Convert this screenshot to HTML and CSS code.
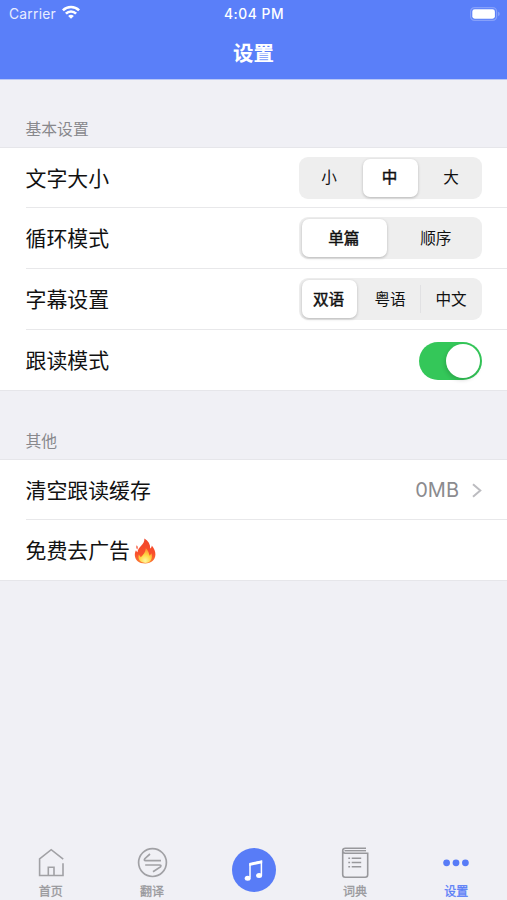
FILE: index.html
```html
<!DOCTYPE html>
<html lang="zh-CN">
<head>
<meta charset="utf-8">
<title>设置</title>
<link rel="stylesheet" href="styles.css">
</head>
<body>
<div class="screen">
  <header class="header">
    <div class="status">
      <div class="carrier"><span>Carrier</span>
        <svg class="wifi" width="18" height="14" viewBox="0 0 18 14" fill="none" stroke="#fff" stroke-width="2.6"><path d="M0.9 5.4a11.5 11.5 0 0 1 16.2 0M3.9 8.600a7.2 7.2 0 0 1 10.2 0"/><path d="M9 13.8 6.1 11.100a4.1 4.1 0 0 1 5.8 0z" fill="#fff" stroke="none"/></svg>
      </div>
      <div class="time">4:04 PM</div>
      <div class="battery"><svg width="30" height="14" viewBox="0 0 30 14"><rect x=".6" y=".6" width="26" height="12.8" rx="4" fill="none" stroke="#86a0fa" stroke-width="1.2"/><rect x="2.3" y="2.3" width="22.6" height="9.4" rx="2.4" fill="#fff"/><path d="M28 4.8q1.8.6 1.8 2.2T28 9.2z" fill="#86a0fa"/></svg></div>
    </div>
    <h1 class="title">设置</h1>
  </header>
  <main class="content">
    <h2 class="section-title first">基本设置</h2>
    <section class="group">
      <div class="row"><span class="label">文字大小</span>
        <div class="segmented"><span class="seg">小</span><span class="seg active">中</span><span class="seg">大</span></div></div>
      <div class="row"><span class="label">循环模式</span>
        <div class="segmented"><span class="seg active">单篇</span><span class="seg">顺序</span></div></div>
      <div class="row"><span class="label">字幕设置</span>
        <div class="segmented"><span class="seg active">双语</span><span class="seg">粤语</span><span class="seg divided">中文</span></div></div>
      <div class="row"><span class="label">跟读模式</span><span class="switch"><span class="knob"></span></span></div>
    </section>
    <h2 class="section-title">其他</h2>
    <section class="group">
      <div class="row"><span class="label">清空跟读缓存</span>
        <div class="detail"><span>0MB</span><svg width="10" height="15" viewBox="0 0 10 15" fill="none" stroke="#bcbcc0" stroke-width="2"><path d="m1 1.2 7.3 6.3L1 13.8"/></svg></div></div>
      <div class="row"><span class="label">免费去广告</span>
        <svg class="fire" width="22" height="26" viewBox="0 0 22 26">
          <defs>
            <linearGradient id="flame" x1="0" y1="0" x2="0" y2="1"><stop offset="0" stop-color="#f0452b"/><stop offset=".6" stop-color="#f9502c"/><stop offset="1" stop-color="#fb7c34"/></linearGradient>
            <radialGradient id="core" cx=".5" cy=".85" r=".8"><stop offset="0" stop-color="#fff6a0"/><stop offset=".5" stop-color="#ffd744"/><stop offset="1" stop-color="#ff8f31"/></radialGradient>
          </defs>
          <path d="M10.4.4c4 2.4 6 5.7 5.8 10 1-.6 1.5-1.7 1.6-3 2.4 2.8 3.7 6 3.6 9.2C21.2 22 17.300 25.500 11.200 25.500 5 25.500.9 22 .8 17c0-1.800.5-3.300 1.200-4.700.4 1 .8 1.700 1.500 2C3.700 8.500 10.800 7 10.400.4zM2.700 7.200c1.400 1.500 1.200 3 .5 4.200-1-1.200-1.100-2.700-.5-4.200z" fill="url(#flame)"/>
          <path d="M11.800 10.200c3.400 3 3 5.700 4 7.500l1.600-2.500c1.700 5-.6 9.700-6.200 9.700-5.300 0-7.700-3.900-6.400-8.300l2 2.600c2.800-2.500 4.600-5.100 5-9z" fill="url(#core)"/>
        </svg></div>
    </section>
  </main>
  <nav class="tabs">
    <a class="tab"><svg width="30" height="30" viewBox="0 0 30 30" fill="none" stroke="#a1a1a5" stroke-width="1.600"><path d="M27.200 10.200 15.200.7 3.600 10v16.500H27V14.200M12.300 26.500v-8.200H18v8.200"/></svg><span>首页</span></a>
    <a class="tab"><svg width="30" height="30" viewBox="0 0 30 30" fill="none" stroke="#a1a1a5" stroke-width="1.700"><circle cx="15.500" cy="13.600" r="13.900"/><path d="M13 5 7.800 9.700q-1.200 2 .8 2H24M8.200 16H22.500q2.300 0 .9 1.900L16 22.800"/></svg><span>翻译</span></a>
    <a class="tab center"><svg width="44" height="44" viewBox="0 0 44 44"><circle cx="22" cy="22" r="22" fill="#587cf7"/><path d="M18 29.500V16l11.400-2.500v13.700" fill="none" stroke="#fff" stroke-width="1.500"/><ellipse cx="15.700" cy="30.200" rx="3" ry="2.500" fill="#fff"/><ellipse cx="27.100" cy="27.500" rx="3" ry="2.500" fill="#fff"/><path d="M17.300 15l12.900-2.700v3L17.300 18z" fill="#fff"/></svg></a>
    <a class="tab book"><svg width="30" height="32" viewBox="0 0 30 32" fill="none" stroke="#98989c" stroke-width="1.600"><path d="M26 1.200H5.500Q2.700 1.200 2.700 3.700v23.800q0 2.700 2.500 2.700h20q2.500 0 2.500-2.500V6.200H5.200q-2.500 0-2.500-2.500"/><path d="M4.500 3.700H26" stroke-width="1.400"/><path d="M8.300 11.300h1.800m1.600 0h9.500M8.300 15.500h1.800m1.600 0h9.500M8.300 19.700h1.800m1.600 0h9.500" stroke-width="1.500"/></svg><span>词典</span></a>
    <a class="tab selected"><svg width="30" height="30" viewBox="0 0 30 30" fill="#587cf7"><circle cx="5.600" cy="13.800" r="3.400"/><circle cx="15" cy="13.800" r="3.400"/><circle cx="24.400" cy="13.800" r="3.400"/></svg><span>设置</span></a>
  </nav>
</div>
</body>
</html>
```
FILE: styles.css
```css
* { box-sizing: border-box; }
body { margin: 0; font-family: Inter, "Noto Sans CJK SC", sans-serif; background: #f0f0f5; color: #111; }
.screen { height: 900px; display: flex; flex-direction: column; overflow: hidden; }
.header { height: 79px; background: #5a7ff9; color: #fff; flex: none; box-shadow: 0 1px #b9c7f7; }
.status { height: 27px; display: grid; grid-template-columns: 1fr auto 1fr; align-items: center; padding: 0 7px 0 9px; font-size: 13.800px; }
.carrier { display: flex; align-items: center; gap: 6px; color: #e8edff; letter-spacing: .25px; }
.wifi { margin-top: -3px; }
.time { font-weight: 500; letter-spacing: .55px; margin-right: 1px; }
.battery { display: flex; justify-content: flex-end; }
.title { margin: 0; height: 52px; line-height: 53px; text-align: center; font-size: 20.500px; font-weight: 600; }
.content { flex: 1; }
.section-title { margin: 0; height: 69px; padding: 40px 26px 0 25.500px; font-size: 15.800px; line-height: 22px; font-weight: 400; color: #88888c; }
.group { background: #fff; border-bottom: 1px solid #e6e6ea; box-shadow: 0 -1px #e6e6ea; }
.row { height: 61px; margin-left: 26px; padding-right: 25px; display: flex; align-items: center; border-bottom: 1px solid #e8e8ea; }
.row:first-child { height: 60px; }
.row:last-child { height: 60px; border-bottom: 0; }
.label { font-size: 20.900px; line-height: 30px; margin-left: -.5px; padding-top: 2px; }
.segmented { margin-left: auto; width: 183px; height: 42px; border-radius: 9px; background: #eee; display: grid; grid-auto-flow: column; grid-auto-columns: minmax(0, 1fr); }
.seg { display: flex; align-items: center; justify-content: center; font-size: 15.600px; line-height: 22px; border-radius: 7px; padding: 1px 1px 0 0; }
.seg.active { background: #fff; -webkit-text-stroke: .45px #111; margin: 2px 3.500px 2px 2.500px; box-shadow: 0 1px 3px rgba(0,0,0,.24); }
.seg.divided { border-radius: 0; box-shadow: -1px 0 #e1e1e3; margin: 7px 0; }
.switch { margin: 1px 0 0 auto; width: 63px; height: 38px; border-radius: 19px; background: #34c759; padding: 2px; display: flex; justify-content: flex-end; }
.knob { width: 34px; height: 34px; border-radius: 50%; background: #fff; box-shadow: -1px 2px 4px rgba(0,0,0,.16); }
.detail { margin-left: auto; display: flex; align-items: center; gap: 13px; padding-top: 1px; font-size: 20px; color: #8b8b8f; }
.fire { margin: 2px 0 0 4px; }
.tabs { height: 57px; display: flex; flex: none; }
.tab { flex: 1; display: flex; flex-direction: column; align-items: center; padding-top: 6px; color: #98989c; font-size: 12px; font-weight: 400; -webkit-text-stroke: .3px currentColor; }
.tab svg { flex: none; overflow: visible; }
.tab span { line-height: 16px; margin-top: auto; }
.tab.center { padding-top: 5px; }
.tab.book { padding-top: 4px; }
.tab.selected { color: #587cf7; }
```
